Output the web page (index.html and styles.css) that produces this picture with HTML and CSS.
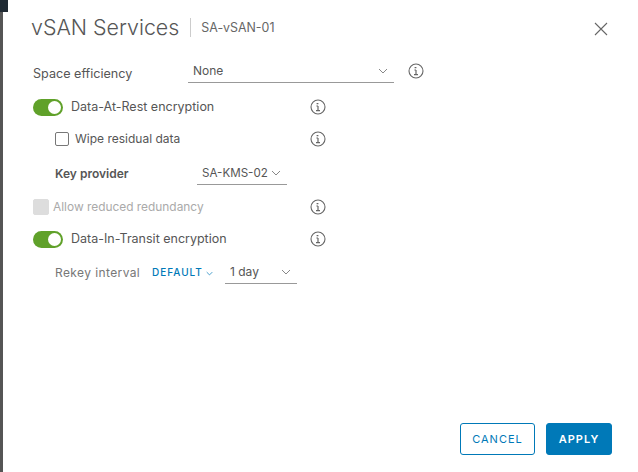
FILE: index.html
```html
<!DOCTYPE html>
<html lang="en">
<head>
  <meta charset="UTF-8" />
  <title>vSAN Services</title>
  <link rel="stylesheet" href="styles.css">
</head>
<body>

<svg class="icon-defs" width="0" height="0">
  <symbol id="info" viewBox="0 0 16 16">
    <circle cx="8" cy="8" r="7" fill="none" stroke="#666" stroke-width="1.1"/>
    <path d="M6.6 4.6h1.8M8 7v4.6M6.4 7h1.6M6 11.6h4" fill="none" stroke="#666" stroke-width="1.2"/>
  </symbol>
  <symbol id="caret" viewBox="0 0 10 6">
    <path d="M1 1l4 4 4-4" fill="none" stroke="currentColor" stroke-width="1"/>
  </symbol>
</svg>

<div class="backdrop">
  <span class="corner"></span>
  <div class="modal">
    <div class="modal-head">
      <h1 class="modal-title">vSAN Services</h1>
      <span class="modal-sub">SA-vSAN-01</span>
      <svg class="close-icon" viewBox="0 0 14 14"><path d="M1 1l12 12M13 1L1 13" fill="none" stroke="#666" stroke-width="1.1"/></svg>
    </div>

    <div class="row row-space">
      <span class="row-label">Space efficiency</span>
      <div class="select select-none"><span>None</span><svg class="caret"><use href="#caret"/></svg></div>
      <svg class="info info-space"><use href="#info"/></svg>
    </div>

    <div class="row row-rest">
      <div class="fixed">
        <span class="toggle"></span>
        <span class="toggle-label">Data-At-Rest encryption</span>
      </div>
      <svg class="info"><use href="#info"/></svg>
    </div>

    <div class="row row-wipe">
      <div class="fixed indent">
        <span class="checkbox"></span>
        <span class="check-label">Wipe residual data</span>
      </div>
      <svg class="info"><use href="#info"/></svg>
    </div>

    <div class="row row-key indent">
      <span class="key-label">Key provider</span>
      <div class="select select-key"><span>SA-KMS-02</span><svg class="caret"><use href="#caret"/></svg></div>
    </div>

    <div class="row row-allow">
      <div class="fixed">
        <span class="checkbox checkbox-off"></span>
        <span class="check-label label-off">Allow reduced redundancy</span>
      </div>
      <svg class="info"><use href="#info"/></svg>
    </div>

    <div class="row row-transit">
      <div class="fixed">
        <span class="toggle"></span>
        <span class="toggle-label">Data-In-Transit encryption</span>
      </div>
      <svg class="info"><use href="#info"/></svg>
    </div>

    <div class="row row-rekey indent">
      <span class="rekey-label">Rekey interval</span>
      <span class="link-default">DEFAULT<svg class="caret-link"><use href="#caret"/></svg></span>
      <div class="select select-day"><span>1 day</span><svg class="caret"><use href="#caret"/></svg></div>
    </div>

    <div class="modal-foot">
      <button class="btn btn-outline">CANCEL</button>
      <button class="btn btn-solid">APPLY</button>
    </div>
  </div>
</div>

</body>
</html>
```

FILE: styles.css
```css
html, body {
  margin: 0;
  height: 100%;
}
body {
  font-family: Inter, "Open Sans", sans-serif;
  font-size: 13px;
  color: #565656;
  background: #fff;
  overflow: hidden;
}
.icon-defs {
  display: block;
  height: 0;
}
.backdrop {
  position: relative;
  height: 472px;
  box-sizing: border-box;
  border-left: 3px solid #555;
}
.corner {
  position: absolute;
  left: -3px;
  top: 0;
  width: 8px;
  height: 12px;
  background: #1f2a33;
}
.modal {
  height: 472px;
  box-sizing: border-box;
  padding: 0 30px 0 30px;
  display: flex;
  flex-direction: column;
}
.modal-head {
  display: flex;
  align-items: center;
  height: 54px;
}
.modal-title {
  margin: 0 0 0 -2px;
  font-size: 21.4px;
  font-weight: 300;
  color: #565656;
  padding-right: 11px;
}
.modal-sub {
  border-left: 1px solid #ccc;
  padding: 2px 0 2px 10px;
  font-size: 12.4px;
  color: #666;
}
.close-icon {
  width: 14px;
  height: 14px;
  margin-left: auto;
  margin-top: 3px;
}
.row {
  display: flex;
  align-items: center;
}
.row-label {
  width: 155px;
  font-size: 12.6px;
  padding-top: 4px;
}
.indent {
  padding-left: 22px;
}
.fixed {
  display: flex;
  align-items: center;
  box-sizing: border-box;
  width: 277px;
}
.select {
  display: flex;
  align-items: center;
  justify-content: space-between;
  box-sizing: border-box;
  border-bottom: 1px solid #999;
  height: 24px;
  font-size: 12px;
}
.caret {
  width: 10px;
  height: 6px;
  color: #888;
}
.info {
  width: 16px;
  height: 16px;
}
.row-space {
  height: 24px;
  margin-top: 5px;
}
.select-none {
  width: 206px;
  padding: 0 6px 0 5px;
}
.info-space {
  margin-left: 14px;
}
.row-rest {
  height: 20px;
  margin-top: 14px;
}
.toggle {
  position: relative;
  width: 30px;
  height: 17px;
  border-radius: 9px;
  background: #60a12a;
  flex: none;
}
.toggle::after {
  content: "";
  position: absolute;
  right: 2px;
  top: 2px;
  width: 13px;
  height: 13px;
  border-radius: 50%;
  background: #fff;
}
.toggle-label {
  margin: 0 0 2px 8px;
  font-size: 12.5px;
}
.row-wipe {
  height: 20px;
  margin-top: 12px;
}
.checkbox {
  width: 12px;
  height: 12px;
  border: 1px solid #777;
  border-radius: 2px;
  flex: none;
}
.checkbox-off {
  width: 14px;
  height: 14px;
  border-color: #ddd;
  background: #ddd;
}
.check-label {
  margin: 0 0 2px 6px;
  font-size: 12px;
}
.label-off {
  color: #aaa;
  margin-left: 4px;
  font-size: 11.9px;
}
.row-key {
  height: 24px;
  margin-top: 12px;
}
.key-label {
  width: 142px;
  font-size: 12px;
  font-weight: 600;
}
.select-key {
  width: 90px;
  padding: 0 6px 0 5px;
  font-size: 11.6px;
}
.row-allow {
  height: 20px;
  margin-top: 12px;
}
.row-transit {
  height: 20px;
  margin-top: 12px;
}
.row-rekey {
  height: 24px;
  margin-top: 11px;
}
.rekey-label {
  width: 97px;
  font-size: 12px;
  letter-spacing: 0.4px;
  color: #777;
}
.link-default {
  width: 73px;
  font-size: 10px;
  font-weight: 500;
  letter-spacing: 1px;
  color: #0079b8;
}
.caret-link {
  width: 7px;
  height: 5px;
  margin-left: 3px;
  color: #0079b8;
}
.select-day {
  width: 72px;
  padding: 0 6px 0 5px;
}
.modal-foot {
  display: flex;
  justify-content: flex-end;
  gap: 11px;
  margin-top: auto;
  padding-bottom: 17px;
  margin-right: -4px;
}
.btn {
  box-sizing: border-box;
  height: 32px;
  border-radius: 3px;
  font-family: inherit;
  font-size: 11px;
  letter-spacing: 1px;
}
.btn-outline {
  width: 75px;
  border: 1px solid #0079b8;
  background: #fff;
  color: #0079b8;
}
.btn-solid {
  width: 66px;
  border: 1px solid #0079b8;
  background: #0079b8;
  color: #fff;
  font-weight: 600;
}
```
